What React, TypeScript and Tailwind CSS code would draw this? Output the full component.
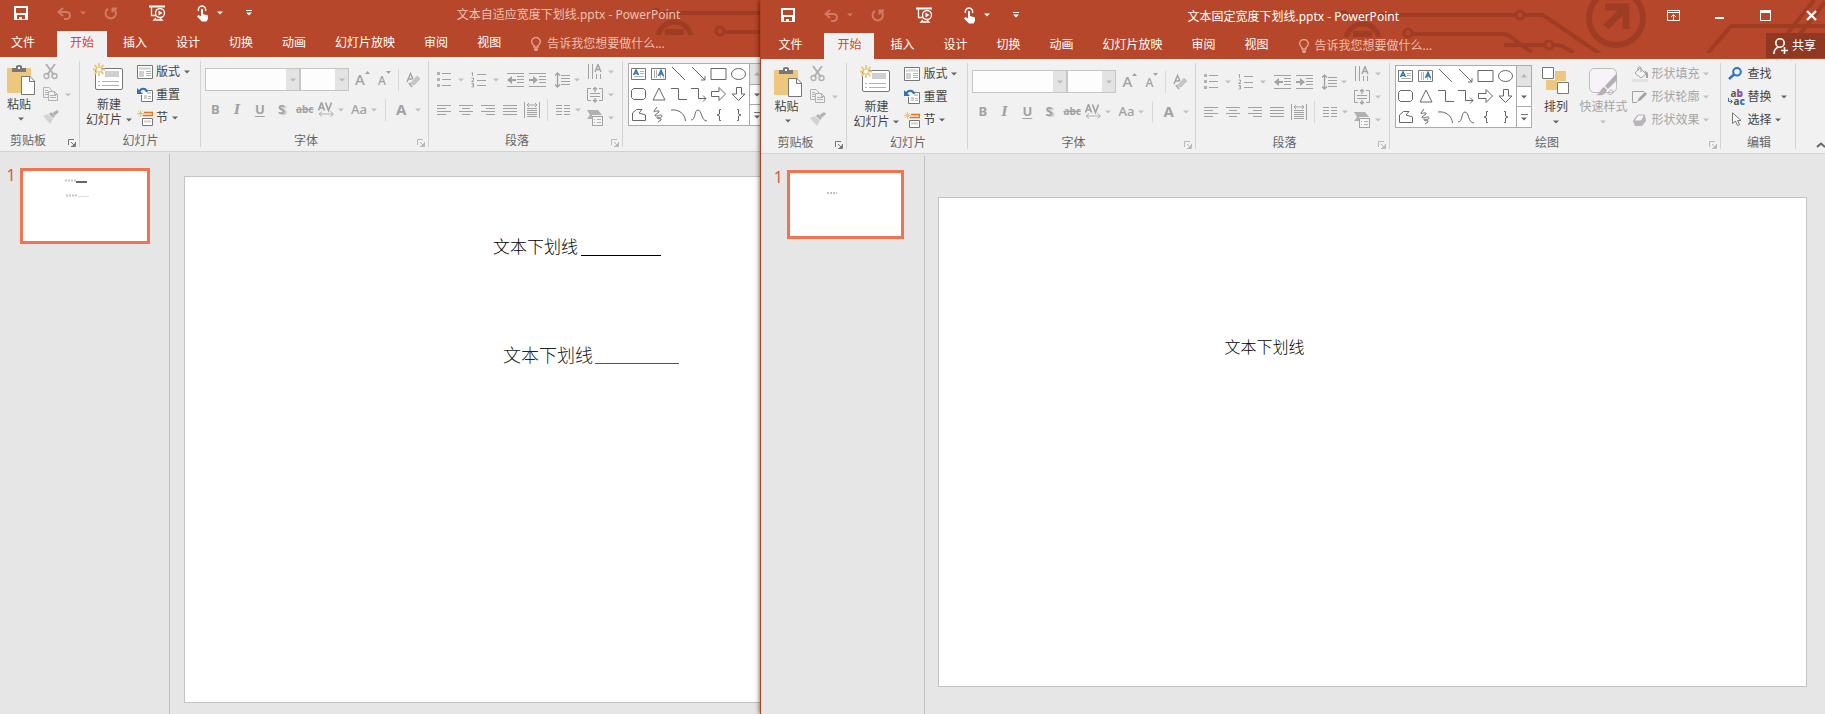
import React from "react";

type Kids = { children?: React.ReactNode };

const G = "#777777";
const L = "#b1b1b1";
const M = "#a2a2a2";
const Y = "#eec77e";

function Icon({ w, h, children }: Kids & { w: number; h: number }) {
  return (
    <svg width={w} height={h} viewBox={`0 0 ${w} ${h}`} fill="none" className="block shrink-0" aria-hidden="true">
      {children}
    </svg>
  );
}

function Caret({ color = "#666666" }: { color?: string }) {
  return (
    <Icon w={6} h={4}>
      <path d="M0 0.5H6L3 3.5Z" fill={color} />
    </Icon>
  );
}

/* ---------- title bar ---------- */

function Circuit() {
  return (
    <svg width="487" height="53" viewBox="0 0 487 53" fill="none" stroke="#9f3d24" strokeWidth="4" className="absolute right-0 bottom-[6px]" aria-hidden="true">
      <path d="M8 15H178M186 15H205L262 54" />
      <circle cx="182" cy="15" r="4" strokeWidth="3" />
      <path d="M2 16A4 4 0 0 1 9 13" strokeWidth="3" />
      <path d="M8 37A17 17 0 0 1 41 37" strokeWidth="5" />
      <path d="M15 34H34" strokeWidth="6" />
      <circle cx="70" cy="33" r="4" strokeWidth="3" />
      <path d="M75 34H166C172 34 180 44 194 52" />
      <path d="M166 45H207M215 45H220C228 46 228 49 236 53" />
      <circle cx="211" cy="45" r="4" strokeWidth="3" />
      <circle cx="278" cy="18" r="27" strokeWidth="6" />
      <path d="M267 7H288V29M288 7L268 27" strokeWidth="7" />
      <path d="M370 53L393 26H487M449 34L476 0M462 34L487 2" />
    </svg>
  );
}

function QuickAccess() {
  const faded = "#cf7b65";
  return (
    <div className="flex h-[26px] items-center text-white">
      <button aria-label="保存" className="ml-[14px] w-[43px]">
        <Icon w={14} h={14}>
          <path fillRule="evenodd" d="M0 0H14V14H0ZM2 2V7H12V2ZM3 9V13H5V11H8V13H11V9Z" fill="#fff" />
        </Icon>
      </button>
      <button aria-label="撤消" className="flex w-[47px] items-center gap-[9px]">
        <Icon w={14} h={13}>
          <path d="M6 1L1.500 5L6 9M2 5H9.500A3.500 3.500 0 0 1 9.500 12H7" stroke={faded} strokeWidth="2" />
        </Icon>
        <Caret color={faded} />
      </button>
      <button aria-label="重复" className="w-[45px]">
        <Icon w={14} h={13}>
          <path d="M9.500 1.800A5.200 5.200 0 1 1 4 1.800M8.500 5.500V1.500H13" stroke={faded} strokeWidth="2" />
        </Icon>
      </button>
      <button aria-label="从头开始" className="w-[48px]">
        <Icon w={17} h={16}>
          <path d="M0 1.500H16" stroke="#fff" strokeWidth="2" />
          <path d="M2.500 2V10.500H7M7 13L5 15H13L11 13" stroke="#fff" strokeWidth="1.300" />
          <circle cx="11" cy="8" r="4.500" fill="#b7472a" stroke="#fff" strokeWidth="1.300" />
          <path d="M9.500 5.500L13.500 8L9.500 10.500Z" fill="#fff" />
        </Icon>
      </button>
      <button aria-label="触摸/鼠标模式" className="flex w-[49px] items-center gap-[8px]">
        <Icon w={12} h={17}>
          <path d="M1.500 6A3.700 3.700 0 1 1 8.500 6" stroke="#fff" strokeWidth="1.500" />
          <path d="M4 4.500Q5 3 6 4.500V9L11 10.500V14L9.500 16.500H5L0 11.500L1.500 10L4 11.500Z" fill="#fff" />
        </Icon>
        <Caret color="#fff" />
      </button>
      <button aria-label="自定义快速访问工具栏">
        <Icon w={6} h={6}>
          <path d="M0 0.500H6" stroke="#fff" />
          <path d="M0 2.500H6L3 5.500Z" fill="#fff" />
        </Icon>
      </button>
    </div>
  );
}

function WindowButtons() {
  return (
    <div className="flex h-[26px] items-center gap-[35px] pr-[8px]">
      <button aria-label="功能区显示选项">
        <Icon w={13} h={11}>
          <path d="M0.500 0.500H12.500V10.500H0.500ZM0 2.500H13M6.500 10V5M4 7L6.500 4.500L9 7" stroke="#fff" />
        </Icon>
      </button>
      <button aria-label="最小化">
        <Icon w={10} h={11}>
          <path d="M0 8H9" stroke="#fff" strokeWidth="2" />
        </Icon>
      </button>
      <button aria-label="最大化">
        <Icon w={11} h={11}>
          <path d="M0.500 0.500H10.500V10.500H0.500Z" stroke="#fff" />
          <path d="M0 1.500H11" stroke="#fff" strokeWidth="3" />
        </Icon>
      </button>
      <button aria-label="关闭">
        <Icon w={11} h={11}>
          <path d="M1 1L10 10M10 1L1 10" stroke="#fff" strokeWidth="2.400" />
        </Icon>
      </button>
    </div>
  );
}

function Header({ title, active }: { title: string; active: boolean }) {
  const tabs = ["开始", "插入", "设计", "切换", "动画", "幻灯片放映", "审阅", "视图"];
  return (
    <header className="relative bg-[#b7472a] text-white">
      <Circuit />
      <div className={`relative flex items-end ${active ? "h-[33px] pl-[6px]" : "h-[31px]"}`}>
        <h1 className={`absolute inset-x-0 bottom-[5px] text-center leading-[22px] ${active ? "text-white" : "text-[#edc1b4]"}`}>{title}</h1>
        <div className="relative flex flex-1 justify-between pb-[5px]">
          <QuickAccess />
          {active && <WindowButtons />}
        </div>
      </div>
      <div className={`relative flex h-[26px] ${active ? "pl-[6px]" : ""}`}>
        <button className="mr-[11px] px-[11px] pb-[2px]">文件</button>
        <nav className="flex gap-[3px]">
          {tabs.map((t, i) => (
            <button key={t} className={`px-[13px] pb-[2px] ${i === 0 ? "bg-[#f1f1f1] text-[#d24726]" : ""}`}>
              {t}
            </button>
          ))}
        </nav>
        <button className="ml-[17px] flex items-center gap-[6px] text-[#efbfae]">
          <Icon w={10} h={14}>
            <path d="M3 10V8.500C1.500 7.500 0.700 6.300 0.700 4.800A4.300 4.300 0 0 1 9.300 4.800C9.300 6.300 8.500 7.500 7 8.500V10ZM3 12H7M3.500 13.500H6.500" stroke="#e3a492" strokeWidth="1.400" />
          </Icon>
          告诉我您想要做什么...
        </button>
        {active && (
          <button className="ml-auto flex h-[25px] items-center gap-[4px] bg-[#8f3822] pr-[9px] pl-[7px]">
            <Icon w={15} h={16}>
              <circle cx="7" cy="5" r="4.200" stroke="#fff" strokeWidth="1.600" />
              <path d="M0.800 16C1 12 3 10 5.500 9M8 12.500H15M11.500 9V16" stroke="#fff" strokeWidth="1.600" />
            </Icon>
            共享
          </button>
        )}
      </div>
    </header>
  );
}

/* ---------- ribbon ---------- */

function Group({ label, width, launcher, dim, children }: Kids & { label: string; width: string; launcher?: string; dim?: boolean }) {
  const c = dim ? "#b9b9b9" : "#777777";
  return (
    <section aria-label={label} className={`${width} relative flex h-[94px] shrink-0 flex-col after:absolute after:top-[4px] after:right-0 after:h-[86px] after:w-px after:bg-[#d4d4d4]`}>
      <div className="flex h-[74px] pt-[3px]">{children}</div>
      <div className="flex h-[20px] items-center text-[#666666]">
        <span className="flex-1 text-center">{label}</span>
        {launcher && (
          <button aria-label={`${label}设置`} className={`${launcher} mt-[4px] flex justify-end pr-[4px]`}>
            <Icon w={8} h={8}>
              <path d="M0.500 6V0.500H6M3 3L6 6M7.500 3V7.500H3" stroke={c} />
              <path d="M7 4V7H4Z" fill={c} />
            </Icon>
          </button>
        )}
      </div>
    </section>
  );
}

function Item({ icon, text, caret, dim, w }: { icon: React.ReactNode; text: string; caret?: boolean; dim?: boolean; w?: boolean }) {
  return (
    <button className={`flex h-[23px] items-center whitespace-nowrap ${dim ? "text-[#a5a5a5]" : "text-[#444444]"}`}>
      <span className="flex w-[19px]">{icon}</span>
      {text}
      {caret && (
        <span className={w ? "ml-[10px]" : "ml-[4px]"}>
          <Caret color={dim ? "#c0c0c0" : "#666666"} />
        </span>
      )}
    </button>
  );
}

function Clipboard() {
  return (
    <Group label="剪贴板" width="w-[80px]" launcher="w-[24px]">
      <button className="flex w-[43px] flex-col pt-[5px] pl-[7px] text-left text-[#444444]">
        <Icon w={28} h={31}>
          <rect x="0" y="3" width="24" height="25" rx="1" fill={Y} />
          <path d="M5 3H9V1Q12 -1 15 1V3H19V7H5Z" fill={G} />
          <rect x="11" y="2" width="2" height="2" fill="#fff" />
          <path d="M14.500 11.500H23L27.500 16V29.500H14.500Z" fill="#fff" stroke={G} />
          <path d="M22.500 11.500V16.500H27.500" stroke={G} />
        </Icon>
        <span className="leading-[18px]">粘贴</span>
        <span className="mt-[3px] ml-[11px]">
          <Caret />
        </span>
      </button>
      <div className="flex flex-col">
        <button aria-label="剪切" className="flex h-[23px] items-center">
          <Icon w={16} h={16}>
            <path d="M3 0L11 11M12 0L4 11" stroke={L} strokeWidth="2" />
            <circle cx="3.500" cy="12" r="2.500" stroke={L} strokeWidth="1.400" />
            <circle cx="11.500" cy="12" r="2.500" stroke={L} strokeWidth="1.400" />
          </Icon>
        </button>
        <button aria-label="复制" className="flex h-[23px] items-center gap-[6px]">
          <Icon w={16} h={15}>
            <path d="M5 10.500H0.500V0.500H6L8.500 3V4M2 3.500H5M2 5.500H5M2 7.500H5" stroke={L} />
            <path d="M5.500 4.500H11.500L14.500 7.500V13.500H5.500ZM11.500 4.500V7.500H14.500M7 8.500H13M7 10.500H13" stroke={L} />
          </Icon>
          <Caret color="#c0c0c0" />
        </button>
        <button aria-label="格式刷" className="flex h-[23px] items-center">
          <Icon w={16} h={15}>
            <path d="M0 6L5 4L10 9L7 14Z" fill="#d6d0d8" />
            <path d="M6 4L8 2L12 6L10 8ZM9.500 3L14 0L16 2L12 5.500Z" fill={L} />
          </Icon>
        </button>
      </div>
    </Group>
  );
}

function Slides() {
  const page = (
    <Icon w={16} h={14}>
      <path d="M0.500 0.500H15.500V13.500H0.500Z" fill="#fff" stroke={G} />
      <path d="M2 3.500H14" stroke="#cfcfcf" strokeWidth="2" />
      <path d="M2 6H7V12H2Z" fill="#cfcfcf" />
      <path d="M9 6.500H14M9 8.500H14M9 10.500H14" stroke={L} />
    </Icon>
  );
  const reset = (
    <Icon w={16} h={15}>
      <path d="M9 3.500H15.500V14.500H4.500V8" fill="#fff" stroke={G} />
      <path d="M7 8H10V12H7ZM10 5H14V7H10Z" fill="#cfcfcf" />
      <path d="M11 9.500H14M11 11.500H14" stroke={L} />
      <path d="M2 5C4 0.500 9 1 10 5" stroke="#2e74b5" strokeWidth="2" />
      <path d="M0 1V7H6Z" fill="#2e74b5" />
    </Icon>
  );
  const sect = (
    <Icon w={16} h={16}>
      <path d="M3.500 0V7M0 3.500H7M1 1L6 6M6 1L1 6" stroke={Y} />
      <path d="M7 2.500H15.500V5.500H6" stroke="#e8751a" strokeWidth="1.500" />
      <path d="M5.500 8.500H15.500V15.500H5.500Z" fill="#fff" stroke={G} />
      <path d="M7 11.500H14" stroke="#cfcfcf" strokeWidth="2" />
    </Icon>
  );
  return (
    <Group label="幻灯片" width="w-[121px]">
      <button className="flex w-[57px] flex-col pt-[3px] pl-[6px] text-left text-[#444444]">
        <span className="pl-[7px]">
          <Icon w={31} h={28}>
            <rect x="2.500" y="5.500" width="27" height="21" rx="1.500" fill="#fff" stroke={G} />
            <path d="M12 8H26V14H12Z" fill="#cfcfcf" />
            <path d="M5 18.500H7M9 18.500H26M5 22.500H7M9 22.500H26" stroke={L} />
            <path d="M6 0V13M0 6.500H12M1.500 2L10.500 11M10.500 2L1.500 11" stroke={Y} strokeWidth="1.800" />
            <circle cx="6" cy="6.500" r="2" fill="#fff" />
          </Icon>
        </span>
        <span className="mt-[6px] pl-[11px] leading-[15px]">新建</span>
        <span className="flex items-center gap-[4px] leading-[15px] whitespace-nowrap">
          幻灯片
          <Caret />
        </span>
      </button>
      <div className="flex flex-col">
        <Item icon={page} text="版式" caret />
        <Item icon={reset} text="重置" />
        <Item icon={sect} text="节" caret />
      </div>
    </Group>
  );
}

function Combo({ label, width }: { label: string; width: string }) {
  return (
    <label className={`${width} relative flex h-[23px]`}>
      <select aria-label={label} defaultValue="" className="w-full appearance-none border border-[#c6c6c6] bg-[#fdfdfd]">
        <option value=""></option>
      </select>
      <span className="pointer-events-none absolute inset-y-px right-px flex w-[13px] items-center justify-center bg-[#e3e3e3]">
        <Caret color="#b9b9b9" />
      </span>
    </label>
  );
}

function Tool({ label, width, caret, children }: Kids & { label: string; width: string; caret?: string }) {
  return (
    <button aria-label={label} className={`${width} flex h-[23px] shrink-0 items-center ${caret ?? ""}`}>
      {children}
      {caret && <Caret color="#c0c0c0" />}
    </button>
  );
}

const Rule = () => <span className="h-[22px] w-px shrink-0 bg-[#d8d8d8]" />;

function FontGroup() {
  return (
    <Group label="字体" width="w-[228px]" launcher="w-[18px]" dim>
      <div className="flex flex-col gap-[7px] pt-[8px] pl-[4px] text-[13px] font-bold text-[#a2a2a2]">
        <div className="flex items-center">
          <Combo label="字体" width="w-[95px]" />
          <Combo label="字号" width="w-[49px]" />
          <button aria-label="增大字号" className="ml-[6px] flex h-[23px] w-[23px] items-start">
            <span className="text-[15px] leading-[23px] font-medium">A</span>
            <Icon w={5} h={7}>
              <path d="M0 6L2.500 3L5 6Z" fill={M} />
            </Icon>
          </button>
          <button aria-label="减小字号" className="flex h-[23px] w-[20px] items-start">
            <span className="text-[12px] leading-[25px] font-medium">A</span>
            <Icon w={5} h={7}>
              <path d="M0 3L2.500 6L5 3Z" fill={M} />
            </Icon>
          </button>
          <Rule />
          <button aria-label="清除所有格式" className="ml-[7px]">
            <Icon w={16} h={16}>
              <path d="M1 10L4.500 1.500L8 9M2.200 7H6.500" stroke={M} strokeWidth="1.400" />
              <path d="M3 12L11 3L15 7L8 14Z" fill="#c9c4cb" stroke="#f1f1f1" />
              <path d="M3 11L6 15" stroke={L} strokeWidth="2" />
            </Icon>
          </button>
        </div>
        <div className="flex items-center pl-[6px]">
          <Tool label="加粗" width="w-[23px]">B</Tool>
          <Tool label="倾斜" width="w-[21px]"><i className="font-['DejaVu_Serif',serif]">I</i></Tool>
          <Tool label="下划线" width="w-[23px]"><u className="underline-offset-2">U</u></Tool>
          <Tool label="文字阴影" width="w-[18px]"><span className="[text-shadow:2px_1px_1px_#c8c8c8]">S</span></Tool>
          <Tool label="删除线" width="w-[22px]"><s className="text-[10px]">abc</s></Tool>
          <Tool label="字符间距" width="w-[33px]" caret="gap-[3px]">
            <Icon w={17} h={15}>
              <path d="M0.500 8.500L3.500 0.500L6.500 8.500M1.500 6H5.500M7.500 0.500L10.500 8.500L13.500 0.500" stroke={M} strokeWidth="1.600" />
              <path d="M1 12H15M4 9.500L1 12L4 14.500M12.500 9.500L15.500 12L12.500 14.500" stroke={L} />
            </Icon>
          </Tool>
          <Tool label="更改大小写" width="w-[34px]" caret="gap-[4px]"><span className="font-medium">Aa</span></Tool>
          <Rule />
          <Tool label="字体颜色" width="w-[32px] pl-[10px]" caret="gap-[9px]"><span className="text-[15px]">A</span></Tool>
        </div>
      </div>
    </Group>
  );
}

const Bars = ({ d }: { d: string }) => (
  <Icon w={14} h={12}>
    <path d={d} stroke={M} />
  </Icon>
);

function Paragraph() {
  return (
    <Group label="段落" width="w-[194px]" launcher="w-[18px]" dim>
      <div className="flex w-[150px] flex-col gap-[7px] pt-[8px] pl-[8px]">
        <div className="flex items-center">
          <Tool label="项目符号" width="w-[34px]" caret="gap-[7px]">
            <Icon w={14} h={15}>
              <path d="M5 1.500H14M5 7.500H14M5 13.500H14" stroke={M} />
              <path d="M0 0H3V3H0ZM0 6H3V9H0ZM0 12H3V15H0Z" fill={L} />
            </Icon>
          </Tool>
          <Tool label="编号" width="w-[36px]" caret="gap-[6px]">
            <Icon w={16} h={16}>
              <path d="M6 2.500H15M6 8.500H15M6 13.500H15" stroke={M} />
              <path d="M0.500 1L1.500 0.500V4M0.500 6H2.500V8L0.500 9.500H3M0.500 11.500H2.500V13H1.500H2.500V15H0.500" stroke={M} />
            </Icon>
          </Tool>
          <Tool label="减少缩进" width="w-[22px]">
            <Icon w={17} h={14}>
              <path d="M0 0.500H17M10 3.500H17M10 6.500H17M10 9.500H17M0 13.500H17" stroke={M} />
              <path d="M0 7L5 3V6H9V8H5V11Z" fill={M} />
            </Icon>
          </Tool>
          <Tool label="增加缩进" width="w-[26px]">
            <Icon w={17} h={14}>
              <path d="M0 0.500H17M10 3.500H17M10 6.500H17M10 9.500H17M0 13.500H17" stroke={M} />
              <path d="M9 7L4 3V6H0V8H4V11Z" fill={M} />
            </Icon>
          </Tool>
          <Tool label="行距" width="w-[30px]" caret="gap-[4px]">
            <Icon w={15} h={16}>
              <path d="M6 3.500H15M6 6.500H15M6 9.500H15M6 12.500H15" stroke={M} />
              <path d="M2.500 1V15M0 3.500L2.500 1L5 3.500M0 12.500L2.500 15L5 12.500" stroke={M} strokeWidth="1.400" />
            </Icon>
          </Tool>
        </div>
        <div className="flex items-center">
          <Tool label="左对齐" width="w-[22px]"><Bars d="M0 1.500H14M0 4.500H9M0 7.500H14M0 10.500H9" /></Tool>
          <Tool label="居中" width="w-[22px]"><Bars d="M0 1.500H14M3 4.500H11M0 7.500H14M3 10.500H11" /></Tool>
          <Tool label="右对齐" width="w-[22px]"><Bars d="M0 1.500H14M5 4.500H14M0 7.500H14M5 10.500H14" /></Tool>
          <Tool label="两端对齐" width="w-[21px]"><Bars d="M0 1.500H14M0 4.500H14M0 7.500H14M0 10.500H14" /></Tool>
          <Tool label="分散对齐" width="w-[23px]">
            <Icon w={16} h={16}>
              <path d="M0.500 0V16M15.500 0V16M3 6.500H13M3 8.500H13M3 10.500H13M3 12.500H13M3 14.500H13" stroke={M} />
              <path d="M3 3H13M5 1L3 3L5 5M11 1L13 3L11 5" stroke={M} />
            </Icon>
          </Tool>
          <Rule />
          <Tool label="分栏" width="w-[32px] pl-[8px]" caret="gap-[5px]">
            <Bars d="M0 1.500H6M8 1.500H14M0 4.500H6M8 4.500H14M0 7.500H6M8 7.500H14M0 10.500H6M8 10.500H14" />
          </Tool>
        </div>
      </div>
      <div className="flex flex-col pl-[8px]">
        <Tool label="文字方向" width="w-[28px]" caret="gap-[5px]">
          <Icon w={16} h={16}>
            <path d="M1.500 0V15M5.500 0V15M9.500 10V15M13.500 10V15" stroke={M} />
            <path d="M8 8L11 0.500L14 8M9 5.500H13" stroke={M} strokeWidth="1.400" />
          </Icon>
        </Tool>
        <Tool label="对齐文本" width="w-[28px]" caret="gap-[5px]">
          <Icon w={16} h={16}>
            <path d="M4 1.500H0.500V13.500H4M12 1.500H15.500V13.500H12M3 6.500H13M3 9.500H13" stroke={M} />
            <path d="M8 0.500V5M8 11V15M6 2.500L8 0.500L10 2.500M6 13L8 15L10 13" stroke={M} strokeWidth="1.300" />
          </Icon>
        </Tool>
        <Tool label="转换为 SmartArt" width="w-[28px]" caret="gap-[5px]">
          <Icon w={16} h={16}>
            <path d="M0 0H11L15 5H5V9H0L3 5Z" fill={L} />
            <rect x="5.500" y="6.500" width="10" height="9" fill="#f7f4f8" stroke={M} />
            <path d="M7 9.500H8M10 9.500H14M7 12.500H8M10 12.500H14" stroke={L} />
          </Icon>
        </Tool>
      </div>
    </Group>
  );
}

const shapes: [string, string][] = [
  ["直线", "M3 3L16 16"],
  ["箭头", "M3 3L16 16M16 12V16H12"],
  ["矩形", "M2 4.500H17V15.500H2Z"],
  ["椭圆", "M2.500 10A7 5.500 0 1 1 16.500 10A7 5.500 0 1 1 2.500 10Z"],
  ["圆角矩形", "M4.500 4.500H14.500L16.500 6.500V13.500L14.500 15.500H4.500L2.500 13.500V6.500Z"],
  ["三角形", "M10 4L16 16H4Z"],
  ["肘形", "M2 4.500H9.500V15.500H18"],
  ["肘形箭头", "M2 4.500H9.500V14.500H17M14 11.500L17 14.500L14 17.500"],
  ["右箭头", "M2.500 7.500H10V3.500L16.500 10L10 16.500V12.500H2.500Z"],
  ["下箭头", "M7.500 3.500V10H3L9.500 16.500L16 10H12.500V3.500Z"],
  ["任意多边形", "M3.500 15.500V8L7.500 4.500H13L10 8L16.500 10V15.500Z"],
  ["曲线", "M8 2L5 6C4 8 11 4 10 7L6 10C5 13 13 8 13 11C12 14 7 11 8 13C9 15 13 12 12 15L9 17"],
  ["弧形", "M2 5C10 4 16 9 16.500 16"],
  ["曲线连接", "M2 15C7 15 5 5 9 5C13 5 12 16 18 16"],
  ["左大括号", "M12 4.500H10.500V9L8 10L10.500 11V15.500H12"],
  ["右大括号", "M8 4.500H9.500V9L12 10L9.500 11V15.500H8"],
];

function Gallery() {
  return (
    <div className="mt-[3px] ml-[5px] flex h-[63px] shrink-0 border border-[#ababab] bg-white">
      <div className="grid grid-cols-6">
        {[false, true].map((v) => (
          <button key={String(v)} aria-label={v ? "竖排文本框" : "文本框"} className="flex">
            <Icon w={20} h={20}>
              <path d="M2.500 4.500H16.500V15.500H2.500Z" stroke={G} />
              {v ? (
                <path d="M5.500 6V14M7.500 6V14M11.500 11V14M14.500 11V14" stroke={L} />
              ) : (
                <path d="M11 7.500H15M11 9.500H15M5 12.500H15" stroke={L} />
              )}
              <path d={v ? "M9.500 12L12 6.500L14.500 12M10 10H14" : "M4.500 11L7 6L9.500 11M5 9.500H9"} stroke="#2e74b5" strokeWidth="1.600" />
            </Icon>
          </button>
        ))}
        {shapes.map(([n, d]) => (
          <button key={n} aria-label={n} className="flex">
            <Icon w={20} h={20}>
              <path d={d} stroke="#666666" />
            </Icon>
          </button>
        ))}
      </div>
      <div className="flex w-[15px] flex-col divide-y divide-[#ababab] border-l border-[#ababab]">
        <button aria-label="上一行" className="flex flex-1 items-center justify-center bg-[#e3e3e3]">
          <Icon w={6} h={4}>
            <path d="M0 3.500L3 0L6 3.500Z" fill="#b5b5b5" />
          </Icon>
        </button>
        <button aria-label="下一行" className="flex flex-1 items-center justify-center">
          <Caret />
        </button>
        <button aria-label="其他形状" className="flex flex-1 flex-col items-center justify-center gap-[2px]">
          <span className="h-px w-[7px] bg-[#777777]" />
          <Caret />
        </button>
      </div>
    </div>
  );
}

function Drawing() {
  return (
    <Group label="绘图" width="w-[331px]" launcher="w-[18px]" dim>
      <Gallery />
      <button className="flex w-[47px] shrink-0 flex-col items-center pt-[5px] text-[#444444]">
        <Icon w={28} h={28}>
          <path d="M13 4H24V14H15V23H4V13H13Z" fill={Y} />
          <path d="M0.500 0.500H11.500V11.500H0.500ZM15.500 15.500H26.500V26.500H15.500Z" fill="#fff" stroke={G} />
        </Icon>
        <span className="mt-[3px] leading-[18px]">排列</span>
        <span className="mt-[4px]">
          <Caret />
        </span>
      </button>
      <button className="flex w-[48px] shrink-0 flex-col items-center pt-[5px] whitespace-nowrap text-[#a5a5a5]">
        <Icon w={30} h={30}>
          <rect x="1.500" y="1.500" width="27" height="24" rx="5" fill="#f7f3f9" stroke="#bdbdbd" />
          <path d="M28 6L16 20L19 23L29 11Z" fill="#f1f1f1" />
          <path d="M29 6V13L20 22L17 19Z" fill={L} />
          <path d="M16 20L19 23C17 28 13 29 8 28C12 27 12 22 16 20Z" fill={L} />
          <path d="M20 26C22 21 26 23 25 26C24 28 20 28 20 26" stroke={L} />
        </Icon>
        <span className="mt-[1px] leading-[18px]">快速样式</span>
        <span className="mt-[4px]">
          <Caret color="#c0c0c0" />
        </span>
      </button>
      <div className="flex flex-col pl-[5px]">
        <Item dim caret text="形状填充" icon={
          <Icon w={16} h={16}>
            <path d="M3 7L8 2L14 8L9 12Z" fill="#f7f3f9" stroke={M} />
            <path d="M6 5V1.500Q7.500 0 9 1.500V6" stroke={M} />
            <path d="M12 4L16 7V12H14V8Z" fill={M} />
            <path d="M0 13H16V16H0Z" fill="#e5dfe8" />
          </Icon>} />
        <Item dim caret text="形状轮廓" icon={
          <Icon w={16} h={14}>
            <path d="M12 1.500H0.500V12.500H5" stroke={M} />
            <path d="M5 12L7 8L13 2L15 4L9 10Z" fill={M} />
          </Icon>} />
        <Item dim caret text="形状效果" icon={
          <Icon w={16} h={14}>
            <path d="M1 8L5 2H13L14 8L10 13H3Z" fill="#b9b3bb" />
            <path d="M2 8L6 2H12.500L9.500 8Z" fill="#f7f3f9" stroke={L} />
          </Icon>} />
      </div>
    </Group>
  );
}

function Editing() {
  return (
    <Group label="编辑" width="w-[75px]">
      <div className="flex flex-col pl-[7px]">
        <Item text="查找" icon={
          <Icon w={15} h={13}>
            <circle cx="9" cy="4.800" r="3.800" stroke="#2e74b5" strokeWidth="2" />
            <path d="M6 7.500L1 12" stroke="#2e74b5" strokeWidth="2.400" />
          </Icon>} />
        <Item text="替换" caret w icon={
          <span className="flex flex-col text-[10px] leading-[8px] font-bold text-[#5a5a5a]">
            <span>a<b className="text-[#8a4fb0]">b</b></span>
            <span className="flex items-center">
              <Icon w={5} h={6}>
                <path d="M0.500 0V3.500H4M2.500 1.500L4.500 3.500L2.500 5.500" stroke="#2e74b5" />
              </Icon>
              a<b className="text-[#2e74b5]">c</b>
            </span>
          </span>} />
        <Item text="选择" caret icon={
          <span className="pl-[4px]">
            <Icon w={10} h={15}>
              <path d="M0.500 0.800V11.500L3.500 9L5.500 13.500L7.500 12.500L5.500 8.500H9Z" fill="#fff" stroke={G} />
            </Icon>
          </span>} />
      </div>
    </Group>
  );
}

function Ribbon({ active }: { active: boolean }) {
  return (
    <div className={`flex h-[95px] border-b border-[#d2d2d2] bg-[#f1f1f1] ${active ? "pl-[6px]" : ""}`}>
      <Clipboard />
      <Slides />
      <FontGroup />
      <Paragraph />
      {active ? (
        <>
          <Drawing />
          <Editing />
          <button aria-label="折叠功能区" className="ml-auto flex shrink-0 items-end pb-[5px]">
            <Icon w={9} h={6}>
              <path d="M1 5L5 1.500L9 5" stroke="#666666" strokeWidth="2" />
            </Icon>
          </button>
        </>
      ) : (
        <div className="pt-[3px]">
          <Gallery />
        </div>
      )}
    </div>
  );
}

/* ---------- windows ---------- */

export default function App() {
  return (
    <main className="flex min-h-screen overflow-hidden bg-[#e6e6e6] font-['Noto_Sans','Noto_Sans_CJK_SC',sans-serif] text-[12px]">
      <section aria-label="文本自适应宽度下划线" className="flex w-5/12 shrink-0 overflow-hidden">
        <div className="flex w-[1137px] shrink-0 flex-col">
          <Header title="文本自适应宽度下划线.pptx - PowerPoint" active={false} />
          <Ribbon active={false} />
          <div className="flex flex-1">
            <aside className="mt-[2px] flex w-[170px] shrink-0 items-start border-r border-[#bfbfbf] pt-[14px]">
              <span className="w-[20px] pl-[2px] text-center text-[16px] leading-[14px] text-[#d8593a]">1</span>
              <button aria-label="幻灯片 1" className="h-[76px] w-[130px] border-[3px] border-[#f3724f] bg-white">
                <svg viewBox="0 0 124 70" className="block size-full" aria-hidden="true">
                  <path d="M42 9.500H53M43 24.500H55" stroke="#c4c4c4" strokeWidth="2" strokeDasharray="2 1" />
                  <path d="M53 11H64" stroke="#666" strokeWidth="2" />
                  <path d="M55 25.500H66" stroke="#ddd" />
                </svg>
              </button>
            </aside>
            <div className="relative mt-[24px] mr-[24px] mb-[11px] ml-[14px] flex-1 border border-[#c3c3c3] bg-white font-['Noto_Sans_CJK_SC',sans-serif] font-light">
              <p className="absolute top-[56px] left-[308px] flex text-[17px] leading-[26px] text-black">
                文本下划线
                <span className="ml-[3px] h-[23px] w-[80px] border-b border-black" />
              </p>
              <p className="absolute top-[164px] left-[318px] flex text-[18px] leading-[26px] text-[#222222]">
                文本下划线
                <span className="ml-[2px] h-[23px] w-[84px] border-b border-[#555555]" />
              </p>
            </div>
          </div>
        </div>
      </section>
      <section aria-label="文本固定宽度下划线" className="relative flex min-w-0 flex-1 flex-col border-l border-[#b83b1d] bg-[#e6e6e6] shadow-[0_0_5px_rgba(0,0,0,0.7)]">
        <Header title="文本固定宽度下划线.pptx - PowerPoint" active />
        <Ribbon active />
        <div className="flex flex-1">
          <aside className="mt-[2px] flex w-[164px] shrink-0 items-start border-r border-[#bfbfbf] pt-[14px] pl-[6px]">
            <span className="w-[20px] pl-[2px] text-center text-[16px] leading-[14px] text-[#d8593a]">1</span>
            <button aria-label="幻灯片 1" className="h-[69px] w-[117px] border-[3px] border-[#f3724f] bg-white">
              <svg viewBox="0 0 111 63" className="block size-full" aria-hidden="true">
                <path d="M37 20H47" stroke="#c0c0c8" strokeWidth="2" strokeDasharray="2 1" />
              </svg>
            </button>
          </aside>
          <div className="relative mt-[43px] mr-[18px] mb-[27px] ml-[13px] flex-1 border border-[#c3c3c3] bg-white font-['Noto_Sans_CJK_SC',sans-serif]">
            <p className="absolute top-[135px] left-[285px] text-[16px] leading-[26px] font-light text-black">文本下划线</p>
          </div>
        </div>
      </section>
    </main>
  );
}
